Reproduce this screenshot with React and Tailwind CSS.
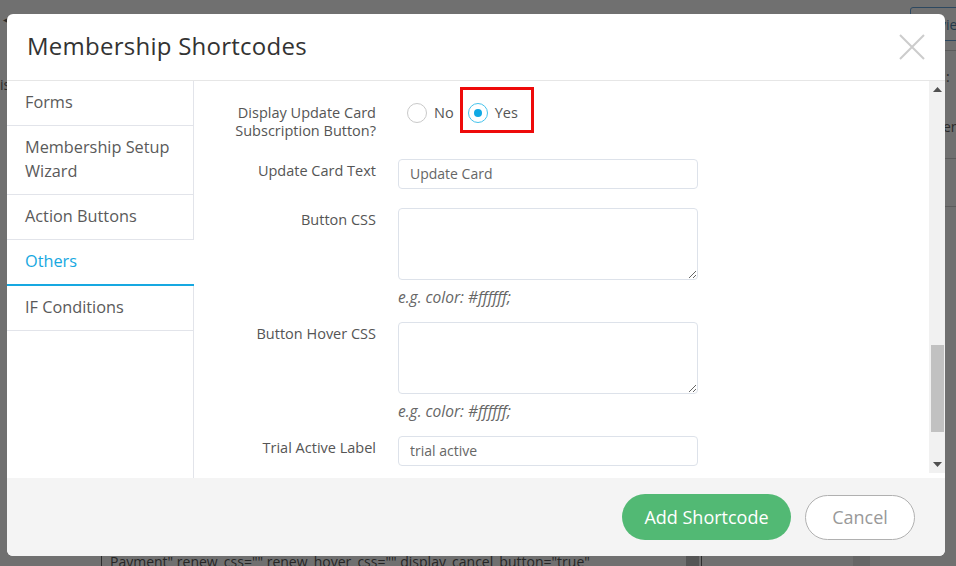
import React from "react";

const navItems = [
  { label: "Forms" },
  { label: "Membership Setup Wizard" },
  { label: "Action Buttons" },
  { label: "Others", active: true },
  { label: "IF Conditions" },
];

const Radio = ({ checked, label }) => {
  return (
    <div className="flex items-center gap-[7px]">
      <span
        className={`flex h-[20px] w-[20px] items-center justify-center rounded-full border bg-white ${
          checked ? "border-[#45c3ec]" : "border-[#c9c9c9]"
        }`}
      >
        {checked && <span className="h-[8px] w-[8px] rounded-full bg-[#10a9e4]" />}
      </span>
      <span className="text-[14.5px] leading-[18px] text-[#555]">{label}</span>
    </div>
  );
};

const Row = ({ label, children, className = "" }) => {
  return (
    <div className={`flex ${className}`}>
      <div className="w-[182px] shrink-0 pt-[3px] text-right text-[14.5px] leading-[18px] text-[#555]">
        {label}
      </div>
      <div className="ml-[22px] w-[300px]">{children}</div>
    </div>
  );
};

const TextInput = ({ value }) => (
  <input
    readOnly
    value={value}
    className="block h-[30px] w-[300px] rounded-[4px] border border-[#dde2ea] bg-white pb-[2px] pl-[11px] text-[14px] text-[#666] outline-none"
  />
);

const Area = () => (
  <textarea
    readOnly
    className="block h-[72px] w-[300px] rounded-[4px] border border-[#dde2ea] bg-white outline-none"
  />
);

const Hint = () => (
  <div className="mt-2 text-[15.5px] italic leading-[18px] text-[#666]">e.g. color: #ffffff;</div>
);

const App = () => {
  return (
    <div className="relative h-[566px] w-[956px] overflow-hidden bg-[#707070] font-['Open_Sans',sans-serif]">
      {/* page behind the overlay */}
      <div className="absolute left-[3px] top-[14px] text-[10px] leading-none text-[#2a2a2a]">◂</div>
      <div className="absolute left-0 top-[76px] text-[14px] leading-[18px] text-[#2a2a2a]">is</div>
      <div className="absolute left-[910px] top-[7px] flex h-[34px] w-[70px] items-center rounded-[3px] border border-[#2d4860] pl-[6px] text-[14px] text-[#23384a]">
        Preview
      </div>
      <div className="absolute left-[945px] top-[50px] h-px w-[11px] bg-[#5c5c5c]" />
      <div className="absolute left-[946px] top-[68px] text-[14px] leading-[18px] text-[#2a2a2a]">:</div>
      <div className="absolute left-[943px] top-[118px] text-[14px] leading-[18px] text-[#2a2a2a]">en</div>
      <div className="absolute left-[945px] top-[158px] h-px w-[11px] bg-[#5c5c5c]" />
      <div className="absolute left-[945px] top-[206px] h-px w-[11px] bg-[#5c5c5c]" />
      <div className="absolute left-[101px] top-[556px] h-[10px] w-px bg-[#2e2e2e]" />
      <div className="absolute left-[686px] top-[556px] h-[10px] w-[13px] bg-[#555]" />
      <div className="absolute left-[701px] top-[556px] h-[10px] w-px bg-[#2e2e2e]" />
      <div className="absolute left-[853px] top-[556px] h-[10px] w-[17px] bg-[#666]" />
      <div className="absolute left-[110px] top-[553px] whitespace-nowrap text-[14px] leading-[18px] text-[#262626]">
        Payment" renew_css="" renew_hover_css="" display_cancel_button="true"
      </div>

      {/* modal */}
      <div className="relative pl-[7px] pt-[14px]">
        <div className="flex h-[542px] w-[938px] flex-col overflow-hidden rounded-[6px] bg-white">
          <div className="flex h-[67px] shrink-0 items-center justify-between border-b border-[#e6e6e6] pl-[20px] pr-[20px]">
            <h2 className="pb-[2px] text-[24px] font-normal tracking-[0.25px] text-[#333]">
              Membership Shortcodes
            </h2>
            <svg width="26" height="26" viewBox="0 0 26 26">
              <path d="M1 1 L25 25 M25 1 L1 25" stroke="#cccccc" strokeWidth="2" fill="none" />
            </svg>
          </div>

          <div className="flex h-[397px] shrink-0">
            <div className="flex w-[187px] shrink-0 flex-col">
              {navItems.map((item) => (
                <div
                  key={item.label}
                  className={
                    item.active
                      ? "border-b-2 border-[#16a8e1] py-[10px] pl-[18px] pr-[10px] text-[16.3px] leading-[24px] text-[#16a8e1]"
                      : "border-b border-r border-[#e2e4ea] py-[10px] pl-[18px] pr-[10px] text-[16.3px] leading-[24px] text-[#5a5a5a]"
                  }
                >
                  <span className="relative -top-px">{item.label}</span>
                </div>
              ))}
              <div className="flex-1 border-r border-[#e2e4ea]" />
            </div>

            <div className="flex-1 pt-[23px]">
              <div className="flex">
                <div className="w-[182px] shrink-0 text-right text-[14.5px] leading-[18px] text-[#555]">
                  Display Update Card Subscription Button?
                </div>
                <div className="ml-[22px] flex h-[18px] items-center gap-[14px] pl-[9px]">
                  <Radio label="No" />
                  <div className="relative">
                    <Radio checked label="Yes" />
                    <div className="absolute -bottom-[10px] -left-[8px] -right-[16px] -top-[16px] border-[3px] border-[#ee0a0a]" />
                  </div>
                </div>
              </div>

              <Row label="Update Card Text" className="mt-[19px]">
                <TextInput value="Update Card" />
              </Row>

              <Row label="Button CSS" className="mt-[19px]">
                <Area />
                <Hint />
              </Row>

              <Row label="Button Hover CSS" className="mt-[16px]">
                <Area />
                <Hint />
              </Row>

              <Row label="Trial Active Label" className="mt-[16px]">
                <TextInput value="trial active" />
              </Row>
            </div>

            <div className="w-[16px] shrink-0">
              <div className="flex h-[392px] flex-col items-center bg-[#f1f1f1] py-[6px]">
                <svg width="9" height="5" viewBox="0 0 9 5">
                  <path d="M0 5 L4.5 0 L9 5 Z" fill="#505050" />
                </svg>
                <div className="mt-[253px] h-[87px] w-[13px] bg-[#c1c1c1]" />
                <svg width="9" height="5" viewBox="0 0 9 5" className="mt-auto">
                  <path d="M0 0 L4.5 5 L9 0 Z" fill="#505050" />
                </svg>
              </div>
            </div>
          </div>

          <div className="flex flex-1 items-center justify-end gap-[14px] bg-[#f4f4f4] pr-[30px]">
            <button className="h-[46px] w-[169px] rounded-full bg-[#52b974] text-[18px] text-white">
              Add Shortcode
            </button>
            <button className="h-[45px] w-[110px] rounded-full border border-[#b0b0b0] bg-white text-[18px] text-[#999]">
              Cancel
            </button>
          </div>
        </div>
      </div>
    </div>
  );
};

export default App;
